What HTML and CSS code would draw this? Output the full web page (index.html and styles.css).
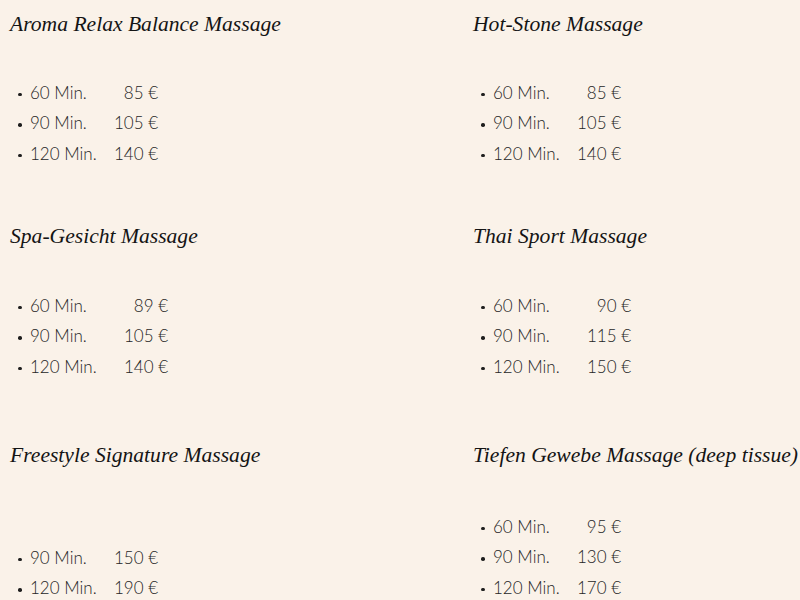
FILE: index.html
```html
<!DOCTYPE html>
<html lang="de">
<head>
<meta charset="utf-8">
<title>Massagen</title>
<link rel="stylesheet" href="styles.css">
</head>
<body>
<main class="menu">
  <section class="item">
    <h2 class="title">Aroma Relax Balance Massage</h2>
    <ul class="prices">
      <li><span class="dur">60 Min.</span><span class="cost">85 €</span></li>
      <li><span class="dur">90 Min.</span><span class="cost">105 €</span></li>
      <li><span class="dur">120 Min.</span><span class="cost">140 €</span></li>
    </ul>
  </section>
  <section class="item">
    <h2 class="title">Hot-Stone Massage</h2>
    <ul class="prices">
      <li><span class="dur">60 Min.</span><span class="cost">85 €</span></li>
      <li><span class="dur">90 Min.</span><span class="cost">105 €</span></li>
      <li><span class="dur">120 Min.</span><span class="cost">140 €</span></li>
    </ul>
  </section>
  <section class="item item-mid">
    <h2 class="title">Spa-Gesicht Massage</h2>
    <ul class="prices prices-wide">
      <li><span class="dur">60 Min.</span><span class="cost">89 €</span></li>
      <li><span class="dur">90 Min.</span><span class="cost">105 €</span></li>
      <li><span class="dur">120 Min.</span><span class="cost">140 €</span></li>
    </ul>
  </section>
  <section class="item item-mid">
    <h2 class="title">Thai Sport Massage</h2>
    <ul class="prices prices-wide">
      <li><span class="dur">60 Min.</span><span class="cost">90 €</span></li>
      <li><span class="dur">90 Min.</span><span class="cost">115 €</span></li>
      <li><span class="dur">120 Min.</span><span class="cost">150 €</span></li>
    </ul>
  </section>
  <section class="item item-last">
    <h2 class="title">Freestyle Signature Massage</h2>
    <ul class="prices prices-offset">
      <li><span class="dur">90 Min.</span><span class="cost">150 €</span></li>
      <li><span class="dur">120 Min.</span><span class="cost">190 €</span></li>
    </ul>
  </section>
  <section class="item item-last">
    <h2 class="title">Tiefen Gewebe Massage (deep tissue)</h2>
    <ul class="prices">
      <li><span class="dur">60 Min.</span><span class="cost">95 €</span></li>
      <li><span class="dur">90 Min.</span><span class="cost">130 €</span></li>
      <li><span class="dur">120 Min.</span><span class="cost">170 €</span></li>
    </ul>
  </section>
</main>
</body>
</html>
```
FILE: styles.css
```css
html, body {
  margin: 0;
  padding: 0;
  background: #faf2e9;
}

.menu {
  display: grid;
  grid-template-columns: 463px 327px;
  grid-template-rows: 212px 219px auto;
  padding: 9px 0 0 10px;
}

.item {
  display: flex;
  flex-direction: column;
}

.title {
  margin: 0;
  font-family: "Liberation Serif", "DejaVu Serif", serif;
  font-style: italic;
  font-weight: 400;
  font-size: 21.6px;
  line-height: 30px;
  color: #141414;
  white-space: nowrap;
}

.prices {
  list-style: none;
  margin: 38px 0 0 0;
  padding: 0 0 0 8px;
  font-family: "Lato", "Liberation Sans", sans-serif;
  font-weight: 300;
  font-size: 17px;
  color: #262626;
}

.item-mid .prices {
  margin-top: 39px;
}

.item-last .prices {
  margin-top: 41px;
}

.item-last .prices-offset {
  margin-top: 72px;
}

.prices li {
  display: grid;
  grid-template-columns: 4px 1fr auto;
  column-gap: 8px;
  align-items: center;
  width: 140px;
  height: 30.5px;
}

.prices-wide li {
  width: 150px;
}

.prices li::before {
  content: "";
  width: 3.5px;
  height: 3.5px;
  border-radius: 50%;
  background: #1e1e1e;
  margin-top: 4px;
}

.cost {
  text-align: right;
}
```
